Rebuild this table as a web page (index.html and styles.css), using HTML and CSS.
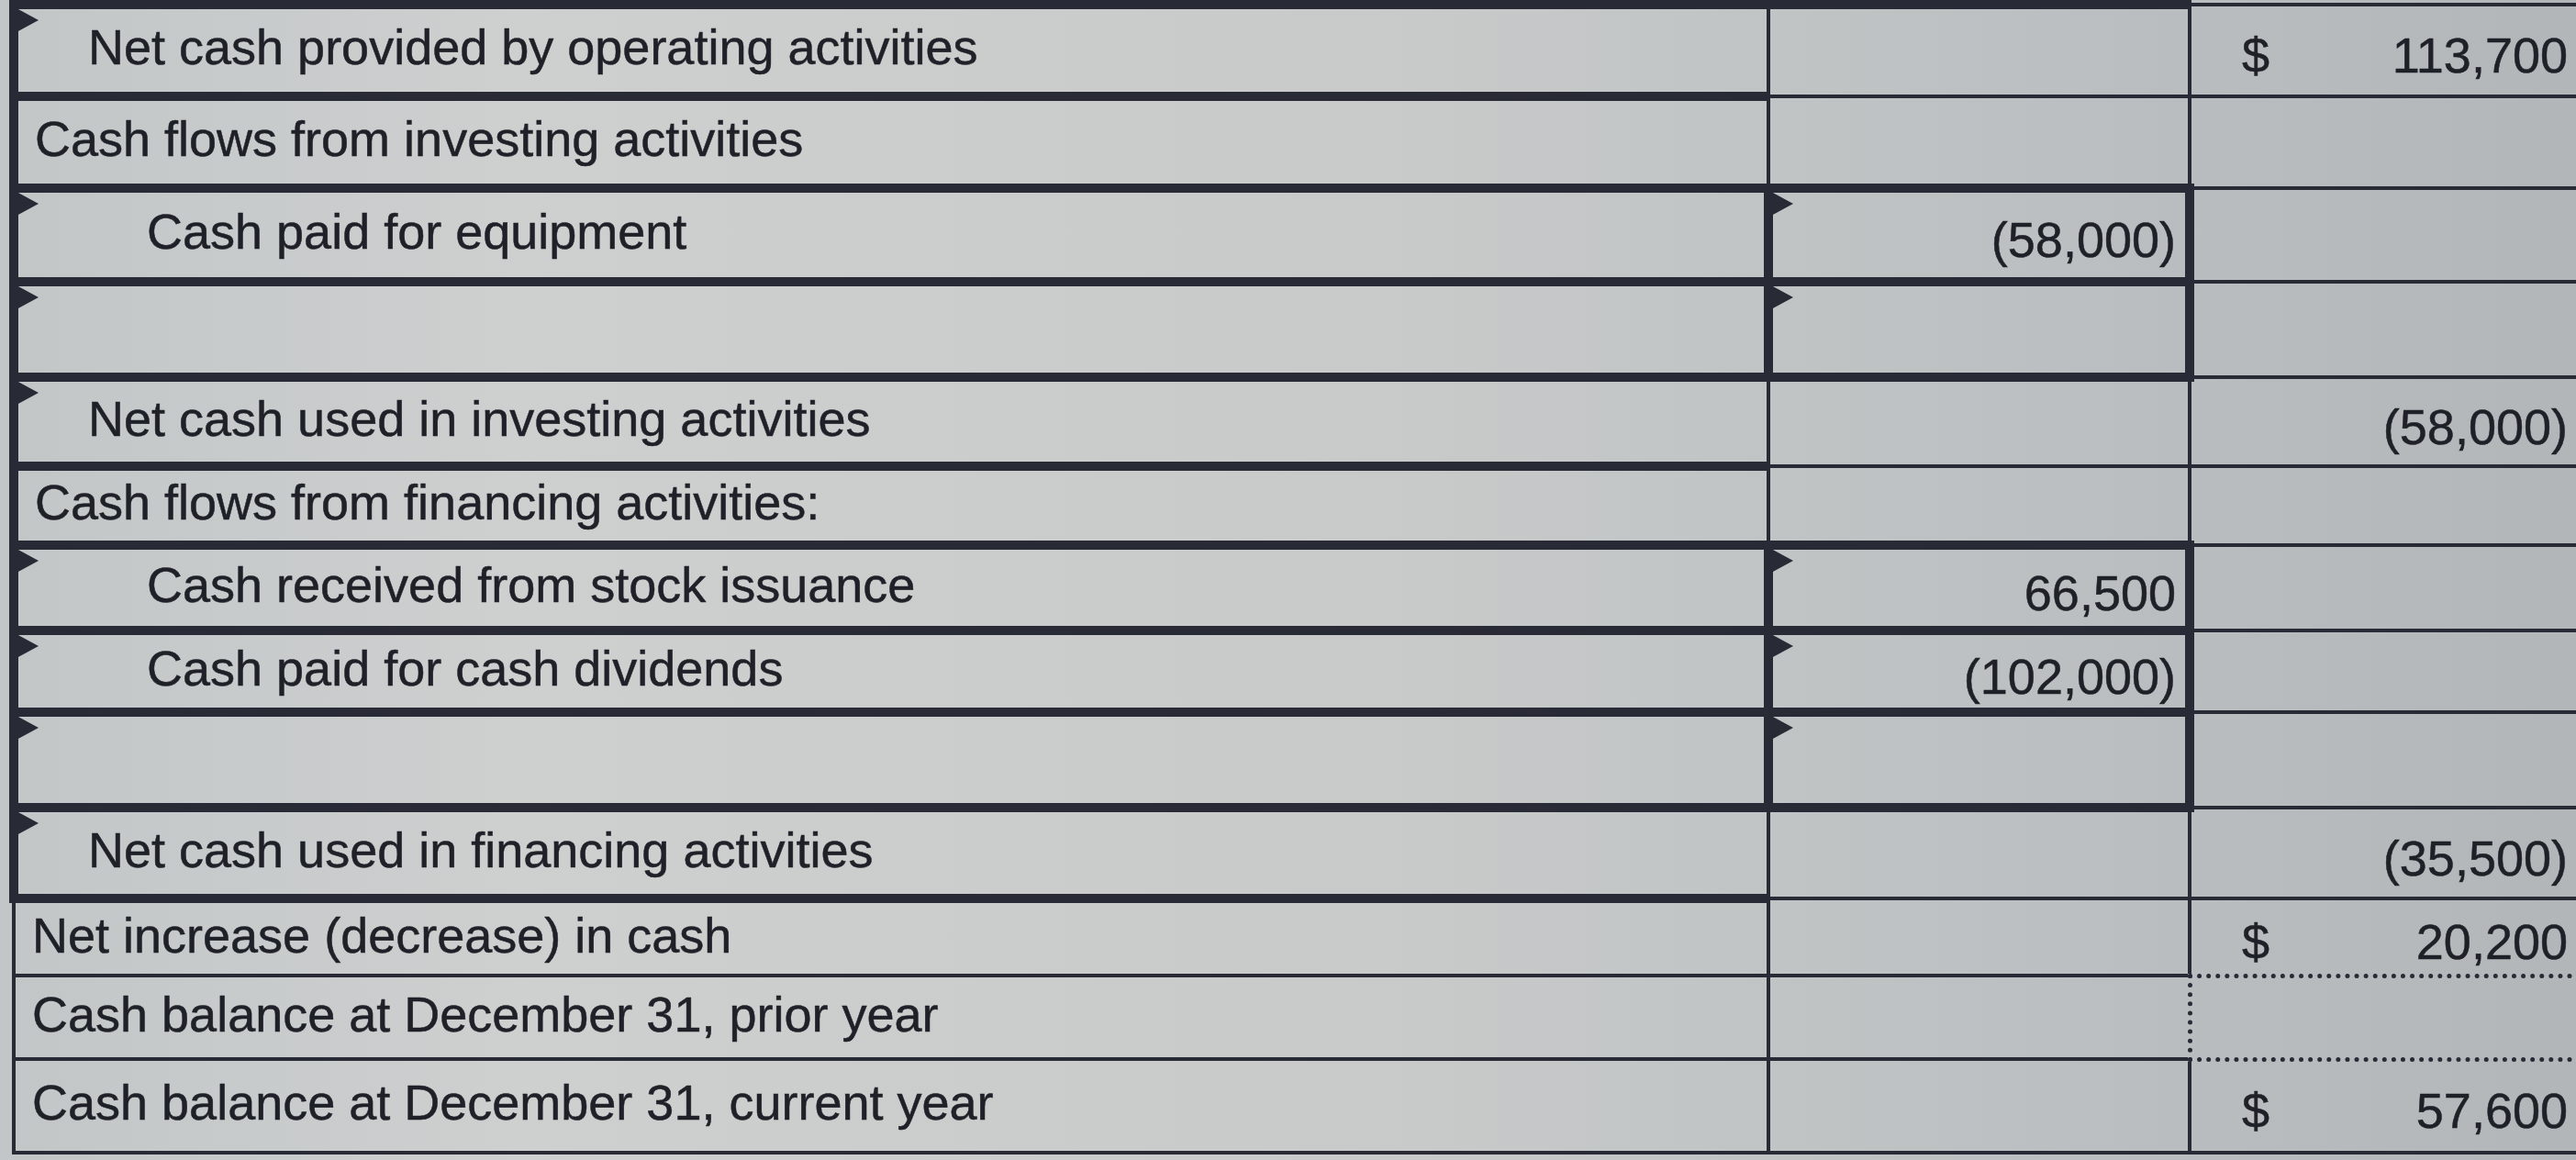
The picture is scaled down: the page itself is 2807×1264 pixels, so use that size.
FILE: index.html
```html
<!DOCTYPE html>
<html lang="en">
<head>
<meta charset="utf-8">
<title>Statement of Cash Flows</title>
<link rel="stylesheet" href="styles.css">
</head>
<body>
<table class="sheet">
  <colgroup>
    <col class="c-label">
    <col class="c-mid">
    <col class="c-right">
  </colgroup>
  <tbody>
    <tr class="h100">
      <td class="lbl l1 flag">Net cash provided by operating activities</td>
      <td class="mid top-thick"></td>
      <td class="num"><div class="amt"><span>$</span><span>113,700</span></div></td>
    </tr>
    <tr class="h100">
      <td class="lbl l0">Cash flows from investing activities</td>
      <td class="mid"></td>
      <td class="num"></td>
    </tr>
    <tr class="h102">
      <td class="lbl l2 flag">Cash paid for equipment</td>
      <td class="mid inp num flag">(58,000)</td>
      <td class="num"></td>
    </tr>
    <tr class="h104">
      <td class="lbl l2 flag"></td>
      <td class="mid inp num flag"></td>
      <td class="num"></td>
    </tr>
    <tr class="h97">
      <td class="lbl l1 flag">Net cash used in investing activities</td>
      <td class="mid"></td>
      <td class="num">(58,000)</td>
    </tr>
    <tr class="h86">
      <td class="lbl l0">Cash flows from financing activities:</td>
      <td class="mid"></td>
      <td class="num"></td>
    </tr>
    <tr class="h93">
      <td class="lbl l2 flag">Cash received from stock issuance</td>
      <td class="mid inp num flag">66,500</td>
      <td class="num"></td>
    </tr>
    <tr class="h89">
      <td class="lbl l2 flag">Cash paid for cash dividends</td>
      <td class="mid inp num flag">(102,000)</td>
      <td class="num"></td>
    </tr>
    <tr class="h104">
      <td class="lbl l2 flag"></td>
      <td class="mid inp num flag"></td>
      <td class="num"></td>
    </tr>
    <tr class="h99">
      <td class="lbl l1 flag">Net cash used in financing activities</td>
      <td class="mid"></td>
      <td class="num">(35,500)</td>
    </tr>
    <tr class="h84">
      <td class="lbl plain l0">Net increase (decrease) in cash</td>
      <td class="mid"></td>
      <td class="num"><div class="amt"><span>$</span><span>20,200</span></div></td>
    </tr>
    <tr class="h91">
      <td class="lbl plain l0">Cash balance at December 31, prior year</td>
      <td class="mid"></td>
      <td class="num dotted"></td>
    </tr>
    <tr class="h102">
      <td class="lbl plain l0">Cash balance at December 31, current year</td>
      <td class="mid"></td>
      <td class="num"><div class="amt"><span>$</span><span>57,600</span></div></td>
    </tr>
  </tbody>
</table>
</body>
</html>
```
FILE: styles.css
```css
html, body {
  margin: 0;
  padding: 0;
}

body {
  width: 2807px;
  height: 1264px;
  overflow: hidden;
  background: linear-gradient(90deg, #c3c6c7 0%, #cdd0cf 20%, #c7cac9 55%, #bcbfc1 80%, #b3b6b9 100%);
  font-family: "Liberation Sans", Arial, sans-serif;
  color: #1f2128;
}

.sheet {
  border-collapse: collapse;
  table-layout: fixed;
  width: 2795px;
  margin-left: 10px;
  font-size: 54px;
}

.c-label { width: 1912px; }
.c-mid { width: 459px; }
.c-right { width: 424px; }

.h84 { height: 84px; }
.h86 { height: 86px; }
.h89 { height: 89px; }
.h91 { height: 91px; }
.h93 { height: 93px; }
.h97 { height: 97px; }
.h99 { height: 99px; }
.h100 { height: 100px; }
.h102 { height: 102px; }
.h104 { height: 104px; }

td {
  border: 4px solid #282b36;
  padding: 0;
  vertical-align: middle;
  line-height: 1;
  white-space: nowrap;
  position: relative;
  -webkit-text-stroke: 0.5px #1f2128;
}

td.lbl {
  border-top-width: 10px;
  border-bottom-width: 10px;
  border-left-width: 10px;
  border-right-width: 4px;
  padding-bottom: 8px;
}

td.lbl.plain {
  border-width: 4px;
}

td.top-thick {
  border-top-width: 10px;
}

td.inp {
  border-width: 10px;
}

td.num {
  text-align: right;
  padding-right: 10px;
  padding-top: 10px;
}

td.dotted {
  border: 5px dotted #282b36;
}

.l0 { padding-left: 18px; }
.l1 { padding-left: 76px; }
.l2 { padding-left: 140px; }

.amt {
  display: flex;
  justify-content: space-between;
  padding-left: 55px;
}

.flag::before {
  content: "";
  position: absolute;
  z-index: 1;
  left: -2px;
  top: -1px;
  width: 0;
  height: 0;
  border-left: 24px solid #282b36;
  border-top: 13px solid transparent;
  border-bottom: 13px solid transparent;
}
```
